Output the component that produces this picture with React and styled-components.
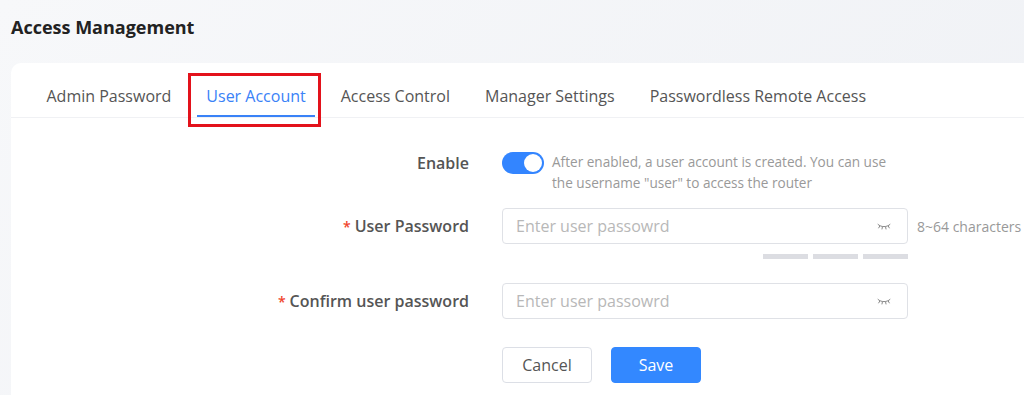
import styled, { createGlobalStyle } from "styled-components";

const GlobalStyle = createGlobalStyle`
  html, body {
    margin: 0;
    padding: 0;
    overflow: hidden;
  }
  body {
    font-family: "Open Sans", "Noto Sans", sans-serif;
    background: #f2f3f6;
  }
`;

const tabs = ["Admin Password", "User Account", "Access Control", "Manager Settings", "Passwordless Remote Access"];

function EyeClosed() {
  return (
    <svg width="14" height="9" viewBox="0 0 14 9" fill="none" stroke="#8a8a8a" strokeWidth="1" strokeLinecap="round">
      <path d="M1 2.4 C3.8 5.4, 10.2 5.4, 13 2.4" />
      <path d="M2.8 4 L1.7 5.9" />
      <path d="M5.4 5 L5 7" />
      <path d="M8.6 5 L9 7" />
      <path d="M11.2 4 L12.3 5.9" />
    </svg>
  );
}

export default function App() {
  return (
    <Page>
      <GlobalStyle />
      <Title>Access Management</Title>
      <Card>
        <TabBar>
          {tabs.map((t) => (
            <Tab key={t} active={t === "User Account"}>{t}</Tab>
          ))}
          <Highlight />
        </TabBar>

        <Form>
          <Row gap="15px">
            <Label>Enable</Label>
            <Control>
              <InlineGroup>
                <Toggle><Knob /></Toggle>
                <Hint>After enabled, a user account is created. You can use the username "user" to access the router</Hint>
              </InlineGroup>
            </Control>
          </Row>

          <Row gap="24px">
            <Label offset="7px"><Star>*</Star>User Password</Label>
            <Control>
              <FieldLine>
                <Field>
                  <Placeholder>Enter user passowrd</Placeholder>
                  <EyeClosed />
                </Field>
                <Extra>8~64 characters</Extra>
              </FieldLine>
              <Strength>
                <Bar />
                <Bar />
                <Bar />
              </Strength>
            </Control>
          </Row>

          <Row gap="28px">
            <Label offset="7px"><Star>*</Star>Confirm user password</Label>
            <Control>
              <Field>
                <Placeholder>Enter user passowrd</Placeholder>
                <EyeClosed />
              </Field>
            </Control>
          </Row>

          <Row>
            <Label />
            <Control>
              <Buttons>
                <Button>Cancel</Button>
                <Button primary>Save</Button>
              </Buttons>
            </Control>
          </Row>
        </Form>
      </Card>
    </Page>
  );
}

const Page = styled.div`
  height: 395px;
  overflow: hidden;
  padding: 15px 0 0 11px;
  box-sizing: border-box;
  background: linear-gradient(135deg, #f7f8fa 0%, #eff1f5 100%);
`;

const Title = styled.h1`
  margin: 0;
  font-size: 18px;
  line-height: 24px;
  font-weight: 700;
  color: #222222;
`;

const Card = styled.div`
  margin-top: 24px;
  width: 1040px;
  height: 332px;
  background: #ffffff;
  border-radius: 10px 10px 0 0;
`;

const TabBar = styled.div`
  position: relative;
  display: flex;
  padding-left: 18px;
  border-bottom: 1px solid #f0f1f4;
`;

const Tab = styled.div`
  position: relative;
  padding: 22px 17.5px 10px;
  font-size: 16px;
  line-height: 22px;
  color: ${(p) => (p.active ? "#3a82f7" : "#555555")};

  &::after {
    content: "";
    display: ${(p) => (p.active ? "block" : "none")};
    position: absolute;
    left: 8px;
    right: 8px;
    bottom: 0;
    height: 2px;
    background: #3a82f7;
  }
`;

const Highlight = styled.div`
  position: absolute;
  left: 177px;
  top: 10px;
  width: 127px;
  height: 48px;
  border: 3px solid #e3121b;
  pointer-events: none;
`;

const Form = styled.div`
  padding-top: 34px;
`;

const Row = styled.div`
  display: flex;
  align-items: flex-start;
  gap: 33px;
  margin-bottom: ${(p) => p.gap || "0"};
`;

const Label = styled.div`
  width: 458px;
  flex-shrink: 0;
  text-align: right;
  font-size: 16px;
  font-weight: 600;
  line-height: 22px;
  color: #555555;
  padding-top: ${(p) => p.offset || "0"};
`;

const Star = styled.span`
  color: #f0442c;
  font-size: 14px;
  margin-right: 4px;
`;

const Control = styled.div`
  display: flex;
  flex-direction: column;
`;

const InlineGroup = styled.div`
  display: flex;
  align-items: flex-start;
  gap: 8px;
`;

const Toggle = styled.div`
  width: 42px;
  height: 22px;
  border-radius: 11px;
  background: #3385ff;
  flex-shrink: 0;
  display: flex;
  align-items: center;
  justify-content: flex-end;
  padding-right: 2px;
  box-sizing: border-box;
`;

const Knob = styled.div`
  width: 18px;
  height: 18px;
  border-radius: 50%;
  background: #ffffff;
`;

const Hint = styled.div`
  width: 345px;
  font-size: 13.6px;
  line-height: 21px;
  color: #999999;
  margin-top: -1px;
`;

const FieldLine = styled.div`
  display: flex;
  align-items: center;
  gap: 9px;
`;

const Field = styled.div`
  width: 406px;
  height: 36px;
  box-sizing: border-box;
  border: 1px solid #dfe1e6;
  border-radius: 4px;
  display: flex;
  align-items: center;
  justify-content: space-between;
  padding: 0 16px 0 13px;
`;

const Placeholder = styled.span`
  font-size: 16px;
  color: #b8b8b8;
`;

const Extra = styled.span`
  font-size: 14px;
  color: #999999;
  white-space: nowrap;
`;

const Strength = styled.div`
  width: 406px;
  display: flex;
  justify-content: flex-end;
  gap: 5px;
  margin-top: 10px;
`;

const Bar = styled.div`
  width: 45px;
  height: 5px;
  background: #dcdde2;
`;

const Buttons = styled.div`
  display: flex;
  gap: 19px;
`;

const Button = styled.button`
  width: 90px;
  height: 36px;
  border-radius: 4px;
  font-family: inherit;
  font-size: 16px;
  cursor: pointer;
  border: 1px solid ${(p) => (p.primary ? "#3388ff" : "#dcdfe6")};
  background: ${(p) => (p.primary ? "#3388ff" : "#ffffff")};
  color: ${(p) => (p.primary ? "#ffffff" : "#555555")};
`;
